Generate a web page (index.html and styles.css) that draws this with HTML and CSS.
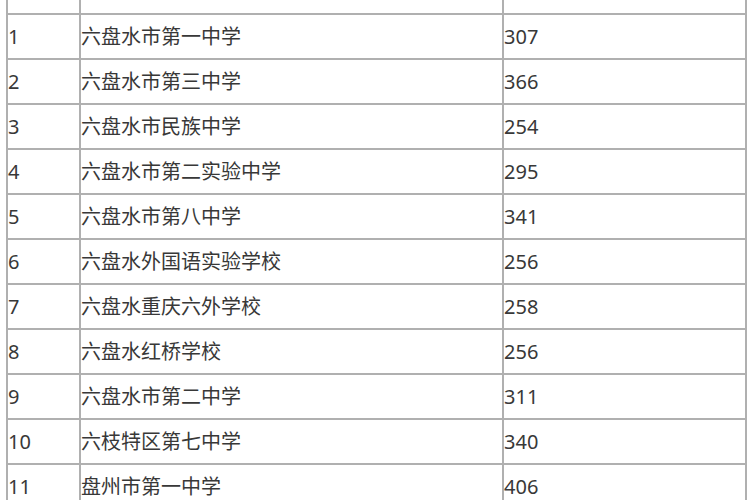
FILE: index.html
```html
<!DOCTYPE html>
<html lang="zh-CN">
<head>
<meta charset="utf-8">
<link rel="stylesheet" href="styles.css">
</head>
<body>
<table class="scores">
  <colgroup><col class="c-no"><col class="c-name"><col class="c-score"></colgroup>
  <tr class="head"><td></td><td></td><td></td></tr>
  <tr><td>1</td><td>六盘水市第一中学</td><td>307</td></tr>
  <tr><td>2</td><td>六盘水市第三中学</td><td>366</td></tr>
  <tr><td>3</td><td>六盘水市民族中学</td><td>254</td></tr>
  <tr><td>4</td><td>六盘水市第二实验中学</td><td>295</td></tr>
  <tr><td>5</td><td>六盘水市第八中学</td><td>341</td></tr>
  <tr><td>6</td><td>六盘水外国语实验学校</td><td>256</td></tr>
  <tr><td>7</td><td>六盘水重庆六外学校</td><td>258</td></tr>
  <tr><td>8</td><td>六盘水红桥学校</td><td>256</td></tr>
  <tr><td>9</td><td>六盘水市第二中学</td><td>311</td></tr>
  <tr><td>10</td><td>六枝特区第七中学</td><td>340</td></tr>
  <tr><td>11</td><td>盘州市第一中学</td><td>406</td></tr>
</table>
</body>
</html>
```
FILE: styles.css
```css
html, body {
  margin: 0;
  padding: 0;
  background: #ffffff;
  overflow: hidden;
}
body {
  padding-left: 6px;
  font-family: "Noto Sans", "Noto Sans CJK SC", sans-serif;
  color: #383838;
}
.scores {
  border-collapse: collapse;
  table-layout: fixed;
  width: 739px;
  font-size: 20px;
}
.c-no { width: 73px; }
.c-name { width: 423px; }
.c-score { width: 243px; }
.scores td {
  border: 2px solid #b0b0b0;
  height: 43px;
  padding: 0;
  vertical-align: middle;
  white-space: nowrap;
  line-height: 1;
}
.scores tr.head td {
  border-top: none;
  height: 13px;
}
```
